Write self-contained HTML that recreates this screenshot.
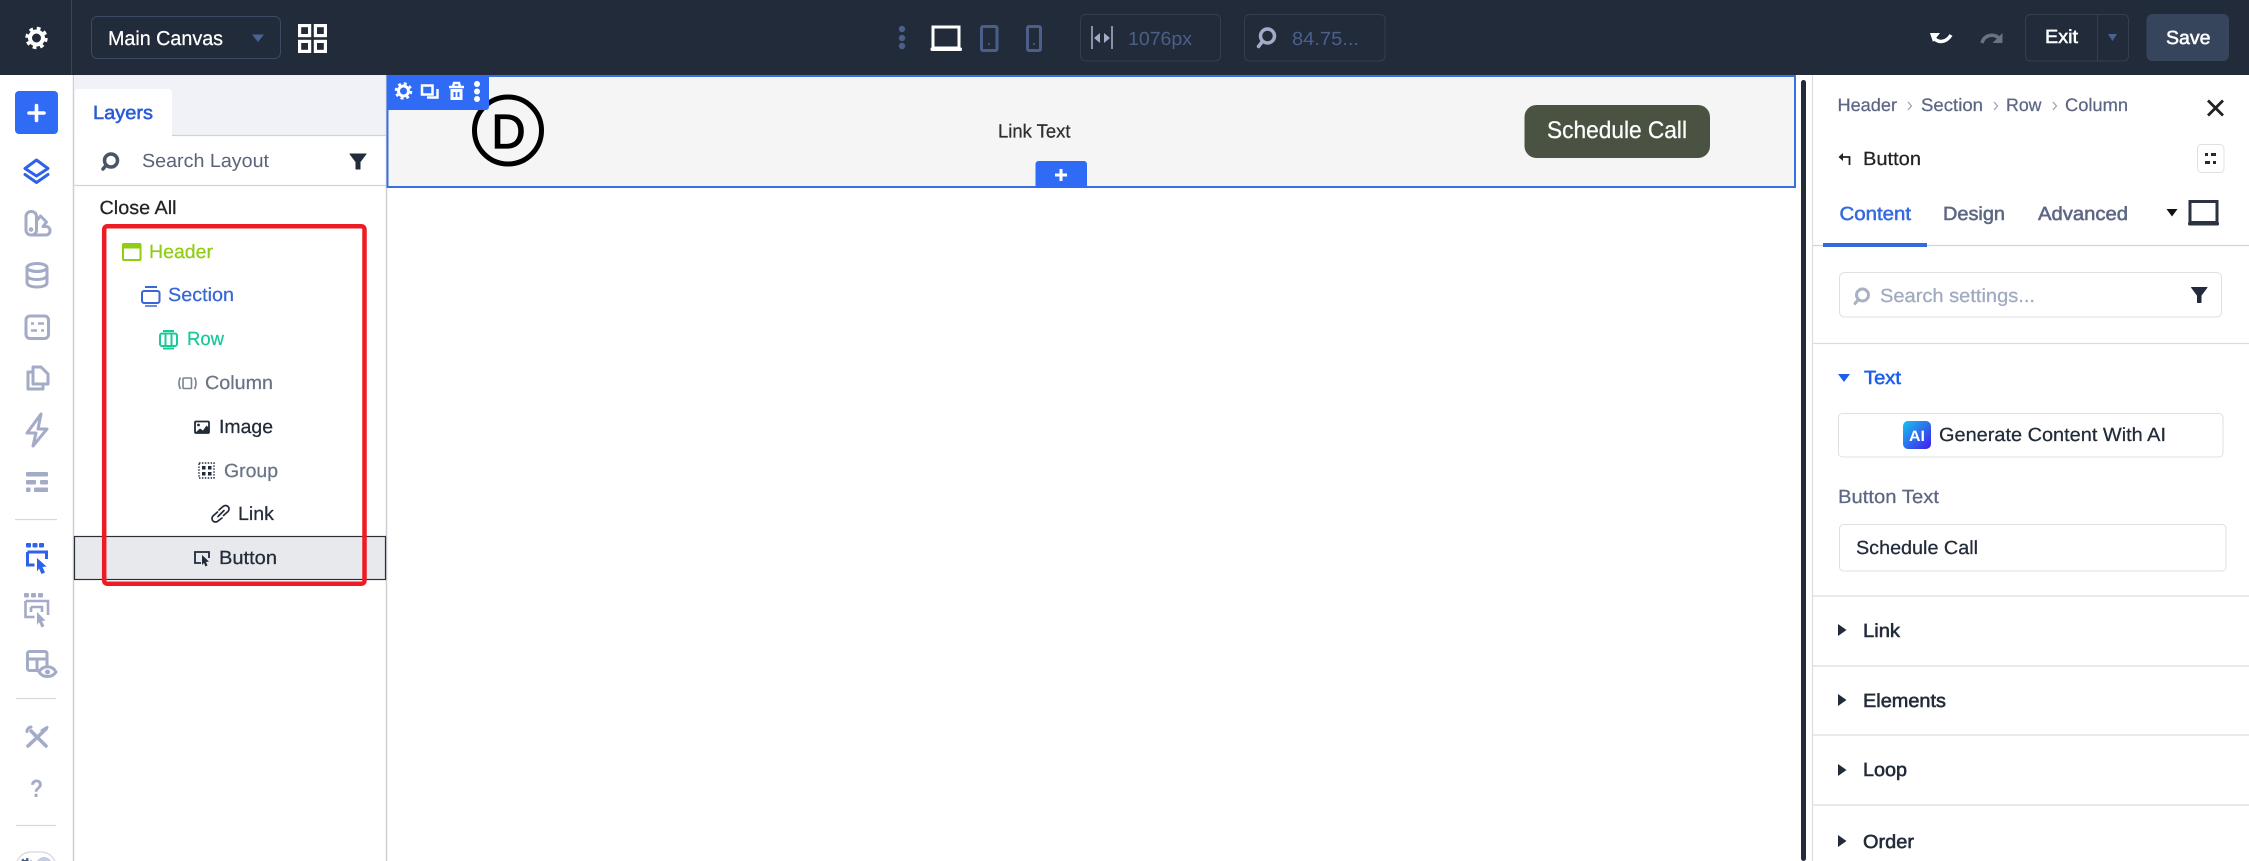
<!DOCTYPE html>
<html lang="en">
<head>
<meta charset="utf-8">
<title>Layers - Visual Builder</title>
<style>
html,body{margin:0;padding:0;width:2249px;height:861px;overflow:hidden;background:#fff}
svg{display:block}
text{font-family:"Liberation Sans",sans-serif;font-size:19px;text-rendering:geometricPrecision}
.m{fill:currentColor;stroke:currentColor;stroke-width:.25px}
.s{fill:currentColor;stroke:currentColor;stroke-width:.55px}
.b{font-weight:700}
.ico{fill:none;stroke:#a3abc7;stroke-width:3;stroke-linejoin:round;stroke-linecap:round}
.blu{stroke:#2f62ea}
</style>
</head>
<body>
<svg width="2249" height="861" viewBox="0 0 2249 861" xmlns="http://www.w3.org/2000/svg">
<rect width="2249" height="861" fill="#fff"/>

<!-- Top bar -->
<rect width="2249" height="75" fill="#222b3a"/>
<line x1="71.5" y1="0" x2="71.5" y2="75" stroke="#3a4456"/>
<g fill="none" stroke="#fff">
  <circle cx="36.5" cy="38" r="6.5" stroke-width="4"/>
  <circle cx="36.5" cy="38" r="9.5" stroke-width="3.4" stroke-dasharray="3.7 3.76"/>
</g>
<rect x="91.5" y="16.5" width="189" height="42" rx="6" fill="none" stroke="#3d4a63"/>
<text x="108" y="45" textLength="115" lengthAdjust="spacingAndGlyphs" class="m" color="#fff" style="font-size:20px">Main Canvas</text>
<path d="M252 34.500h12l-6 7.500z" fill="#4a6291"/>
<g fill="none" stroke="#fff" stroke-width="3.200">
  <rect x="299.600" y="25.600" width="10" height="10"/>
  <rect x="315.400" y="25.600" width="10" height="10"/>
  <rect x="299.600" y="41.400" width="10" height="10"/>
  <rect x="315.400" y="41.400" width="10" height="10"/>
</g>

<!-- Devices -->
<g fill="#4b5f8a">
  <circle cx="902" cy="29" r="3.200"/><circle cx="902" cy="38" r="3.200"/><circle cx="902" cy="46" r="3.200"/>
</g>
<rect x="933" y="27" width="26" height="21" fill="none" stroke="#fff" stroke-width="3"/>
<rect x="930.500" y="47.500" width="31.500" height="3.500" rx="1.500" fill="#fff"/>
<rect x="981.500" y="26.500" width="15.500" height="24" rx="1.500" fill="none" stroke="#4b5f8a" stroke-width="3"/>
<circle cx="989" cy="44" r="1" fill="#4b5f8a"/>
<rect x="1027.500" y="26.500" width="13" height="24" rx="1.500" fill="none" stroke="#4b5f8a" stroke-width="3"/>
<circle cx="1034" cy="44" r="1" fill="#4b5f8a"/>

<rect x="1080.500" y="14.500" width="140" height="46.500" rx="5" fill="none" stroke="#343e52"/>
<g stroke="#a3abc7" stroke-width="1.600" fill="none">
  <line x1="1092" y1="26" x2="1092" y2="49"/><line x1="1112" y1="26" x2="1112" y2="49"/>
</g>
<path d="M1094 38l6-5v10zM1110 38l-6-5v10z" fill="#a3abc7"/>
<text x="1128" y="45" textLength="64" lengthAdjust="spacingAndGlyphs" fill="#4b5f8a">1076px</text>

<rect x="1244.500" y="14.500" width="140.500" height="46.500" rx="5" fill="none" stroke="#343e52"/>
<circle cx="1267.500" cy="36" r="7" fill="none" stroke="#a3abc7" stroke-width="3.500"/>
<line x1="1262" y1="42" x2="1258.500" y2="46.500" stroke="#a3abc7" stroke-width="3.500" stroke-linecap="round"/>
<text x="1292" y="45" textLength="67" lengthAdjust="spacingAndGlyphs" fill="#4b5f8a">84.75...</text>

<!-- Right of top bar -->
<path d="M1930 33h10l-7 9z" fill="#fff"/>
<path d="M1934 38c4 5 12 5 17-3" fill="none" stroke="#fff" stroke-width="3.500"/>
<path d="M1982 43c2-8 11-10 17-5" fill="none" stroke="#6a7280" stroke-width="3.500"/>
<path d="M2002.500 33v10h-10z" fill="#6a7280"/>
<rect x="2025.500" y="14.500" width="103" height="46.500" rx="5" fill="none" stroke="#343e52"/>
<line x1="2097.500" y1="14.500" x2="2097.500" y2="61" stroke="#343e52"/>
<text x="2045" y="43" textLength="33" lengthAdjust="spacingAndGlyphs" class="s" color="#fff">Exit</text>
<path d="M2108 34h9l-4.500 7z" fill="#4a6291"/>
<rect x="2146.500" y="14" width="82.500" height="47" rx="6" fill="#36455c"/>
<text x="2166" y="44" textLength="44.500" lengthAdjust="spacingAndGlyphs" class="s" color="#fff">Save</text>

<!-- Left icon rail -->
<line x1="73.500" y1="75" x2="73.500" y2="861" stroke="#cfcfd4" stroke-width="1.500"/>
<rect x="15" y="91" width="43" height="43" rx="4" fill="#2f6bf5"/>
<path d="M29 113h15M36.500 105.500v15" stroke="#fff" stroke-width="3.600" stroke-linecap="round"/>

<path class="ico blu" d="M36.500 160l11.500 8.500-11.500 7.500-11.500-7.500zM25 174.500l11.500 8 11.500-8"/>

<g class="ico">
  <rect x="26" y="211.500" width="10.500" height="23.500" rx="5"/>
  <path d="M36.500 221l4-5 6 6-3.500 4.500h3a4 4 0 0 1 4 4v.5a4 4 0 0 1-4 4H31"/>
  <circle cx="31" cy="229.500" r="0.800" fill="#a3abc7"/>
</g>

<g class="ico">
  <ellipse cx="37" cy="267.500" rx="10" ry="4"/>
  <path d="M27 267.500v15c0 3 4.500 4.500 10 4.500s10-1.500 10-4.500v-15M27 275c0 3 4.500 4.500 10 4.500s10-1.500 10-4.500"/>
</g>

<rect class="ico" x="26" y="316" width="22.500" height="22.500" rx="4"/>
<path d="M31 323.500h3M38 323.500h6M31 330.500h6M41 330.500h3" stroke="#a3abc7" stroke-width="2.400" fill="none"/>

<g class="ico">
  <path d="M33 367h8l7 7v10H33z"/>
  <path d="M33 372h-5v17h15v-5"/>
</g>

<path class="ico" d="M41 414L27 433h9l-3 13 14-17h-9z"/>

<g fill="#a3abc7">
  <rect x="26" y="472" width="22" height="4.500" rx="1"/>
  <rect x="26" y="480" width="10" height="4.500" rx="1"/><rect x="40" y="480" width="8" height="4.500" rx="1"/>
  <rect x="26" y="487.500" width="4.500" height="4.500" rx="1"/><rect x="34" y="487.500" width="14" height="4.500" rx="1"/>
</g>
<line x1="15" y1="519.500" x2="57" y2="519.500" stroke="#d7d7dc" stroke-width="1.200"/>

<g fill="#2f62ea">
  <rect x="26" y="543" width="5" height="4.500" rx="1"/><rect x="32.500" y="543" width="5" height="4.500" rx="1"/><rect x="39" y="543" width="5" height="4.500" rx="1"/>
  <path d="M37 558l9.500 8.500-4 .5 2.500 5.500-3.500 1.500-2.500-5.500-2 3z"/>
</g>
<path d="M27.500 552h19v7M27.500 552v13h7" fill="none" stroke="#2f62ea" stroke-width="3"/>

<g fill="#a3abc7">
  <rect x="24" y="593" width="5" height="4.500" rx="1"/><rect x="31" y="593" width="5" height="4.500" rx="1"/><rect x="38" y="593" width="5" height="4.500" rx="1"/>
  <path d="M37 612l8.500 8.500-3.500.5 2.500 5-3 1.500-2.500-5.500-2 3z"/>
</g>
<path d="M25.500 601h22.500v14M25.500 601v16h9M31 607h11v5M31 607v5" fill="none" stroke="#a3abc7" stroke-width="2.600"/>

<g class="ico">
  <rect x="27.500" y="651.500" width="19.500" height="19" rx="2"/>
  <path d="M27.500 659h19.500M37 659v11"/>
  <path d="M39 672c4-7 13-7 17 0-4 6-13 6-17 0z" fill="#fff"/>
  <circle cx="47.500" cy="672" r="1" fill="#a3abc7"/>
</g>
<line x1="16" y1="698.500" x2="56" y2="698.500" stroke="#d7d7dc" stroke-width="1.200"/>

<g stroke="#a3abc7" fill="none" stroke-linecap="round">
  <path d="M28 746L46 729" stroke-width="3.600"/>
  <path d="M31 731L46 746" stroke-width="3.600"/>
  <path d="M31 727a4.500 4.500 0 0 0-4 4.500M42 730.500l5-3" stroke-width="3"/>
</g>
<text x="30" y="797" textLength="13" lengthAdjust="spacingAndGlyphs" class="b" fill="#a3abc7" style="font-size:25px">?</text>
<line x1="16" y1="825.500" x2="56" y2="825.500" stroke="#d7d7dc" stroke-width="1.200"/>
<rect x="16" y="852" width="40" height="30" rx="15" fill="#fff" stroke="#dcdde3" stroke-width="1.500"/>
<g fill="none" stroke="#4b5f8a">
  <circle cx="26" cy="865" r="4" stroke-width="2.500"/>
  <circle cx="26" cy="865" r="6" stroke-width="2" stroke-dasharray="2.400 2.300"/>
</g>
<circle cx="44" cy="865" r="8" fill="#c5cbe0"/>

<!-- Layers panel -->
<rect x="74" y="75" width="312" height="60" fill="#f0f2f7"/>
<path d="M75 135V92a3 3 0 0 1 3-3h91a3 3 0 0 1 3 3v43z" fill="#fff"/>
<line x1="172" y1="135.500" x2="386" y2="135.500" stroke="#cfd2da" stroke-width="1.200"/>
<line x1="386.500" y1="75" x2="386.500" y2="861" stroke="#cfcfd4" stroke-width="1.500"/>
<text x="93" y="119" textLength="60" lengthAdjust="spacingAndGlyphs" class="s" color="#2a5bd7">Layers</text>
<circle cx="111" cy="160.500" r="6.500" fill="none" stroke="#4a5468" stroke-width="3.500"/>
<line x1="105.500" y1="166" x2="103" y2="169" stroke="#4a5468" stroke-width="3.500" stroke-linecap="round"/>
<text x="142" y="167" textLength="127" lengthAdjust="spacingAndGlyphs" fill="#5a6478">Search Layout</text>
<path d="M350 154h16l-6 8v7h-4v-7z" fill="#222b3a" stroke="#222b3a" stroke-linejoin="round"/>
<line x1="74" y1="185.500" x2="386" y2="185.500" stroke="#d3d4d9" stroke-width="1.200"/>
<text x="99.500" y="214" textLength="77" lengthAdjust="spacingAndGlyphs" class="m" color="#222">Close All</text>

<!-- Button row -->
<rect x="74.500" y="536.500" width="311" height="43" fill="#e8e9ec" stroke="#2a2f3a" stroke-width="1.200"/>

<!-- Tree rows -->
<rect x="123" y="244" width="17.500" height="16" rx="1" fill="none" stroke="#8fcd12" stroke-width="2"/>
<rect x="123" y="243" width="17.500" height="5.500" fill="#8fcd12"/>
<text x="149" y="258" textLength="64" lengthAdjust="spacingAndGlyphs" class="m" color="#8fcd12">Header</text>

<rect x="142" y="291" width="17.500" height="12" rx="2" fill="none" stroke="#3867d6" stroke-width="2"/>
<path d="M145 287h12" stroke="#3867d6" stroke-width="2"/>
<path d="M145 306h12" stroke="#3867d6" stroke-width="1.500"/>
<text x="168" y="301" textLength="66" lengthAdjust="spacingAndGlyphs" class="m" color="#3867d6">Section</text>

<g fill="none" stroke="#18c99a" stroke-width="2">
  <rect x="160" y="333.500" width="17" height="12.500" rx="2"/>
  <path d="M163 331h11M163 348.500h11M165.500 334v12M171.500 334v12"/>
</g>
<text x="187" y="345" textLength="37" lengthAdjust="spacingAndGlyphs" class="m" color="#18c99a">Row</text>

<g fill="none" stroke="#7a8295" stroke-width="1.600">
  <rect x="183" y="378" width="8.500" height="10.500" rx="1"/>
  <path d="M180.500 377.500c-2 3-2 8 0 11.500M194.500 377.500c2 3 2 8 0 11.500"/>
</g>
<text x="205" y="389" textLength="68" lengthAdjust="spacingAndGlyphs" class="m" color="#6b7487">Column</text>

<rect x="195" y="421.500" width="14" height="11.500" rx="1" fill="#fff" stroke="#222b3a" stroke-width="1.800"/>
<circle cx="198.500" cy="425" r="1.400" fill="#222b3a"/>
<path d="M195 433l5-4.500 3 2 3.500-5 2.500 2.500v5z" fill="#222b3a"/>
<text x="219" y="433" textLength="54" lengthAdjust="spacingAndGlyphs" class="m" color="#222b3a">Image</text>

<g fill="#222b3a">
  <rect x="199" y="463" width="15" height="15" fill="none" stroke="#222b3a" stroke-width="1.400" stroke-dasharray="1.500 1.400"/>
  <rect x="202" y="466" width="3.500" height="3.500"/><rect x="208" y="466" width="3.500" height="3.500"/>
  <rect x="202" y="472" width="3.500" height="3.500"/><rect x="208" y="472" width="3.500" height="3.500"/>
</g>
<text x="224" y="477" textLength="54" lengthAdjust="spacingAndGlyphs" class="m" color="#6b7487">Group</text>

<g fill="none" stroke="#222b3a" stroke-width="1.700" stroke-linecap="round">
  <path d="M219 510l4-3.500a3.500 3.500 0 0 1 5 5l-4.500 4"/>
  <path d="M222 518l-4 3a3.500 3.500 0 0 1-5-5l4.500-4"/>
  <path d="M218 516.500l6-6"/>
</g>
<text x="238" y="520" textLength="36" lengthAdjust="spacingAndGlyphs" class="m" color="#222b3a">Link</text>

<path d="M201 563h-6v-11h14v6" fill="none" stroke="#222b3a" stroke-width="1.800"/>
<path d="M202 555l7 6.500-3 .5 1.500 3.500-2 1-1.500-3.500-2 2z" fill="#222b3a"/>
<text x="219" y="564" textLength="58" lengthAdjust="spacingAndGlyphs" class="m" color="#222b3a">Button</text>

<!-- Red box -->
<rect x="104.200" y="226.200" width="260.300" height="357.600" rx="3" fill="none" stroke="#ed1c24" stroke-width="4.500"/>

<!-- Canvas section -->
<rect x="387.500" y="76" width="1407.500" height="111" fill="#f5f5f5" stroke="#3b6fe0" stroke-width="2"/>

<!-- D logo -->
<circle cx="508" cy="130.500" r="33.500" fill="none" stroke="#000" stroke-width="5"/>
<text x="491.500" y="148" textLength="34" lengthAdjust="spacingAndGlyphs" fill="#000" stroke="#000" stroke-width="1.200" style="font-size:48px">D</text>

<text x="998" y="137.500" textLength="72.500" lengthAdjust="spacingAndGlyphs" class="m" color="#2f2f2f">Link Text</text>

<rect x="1524.500" y="105" width="185.500" height="53" rx="12" fill="#4a5342"/>
<text x="1547" y="138" textLength="140" lengthAdjust="spacingAndGlyphs" class="m" color="#fff" style="font-size:24px">Schedule Call</text>

<path d="M1035.500 188v-24a3 3 0 0 1 3-3h45.500a3 3 0 0 1 3 3v24z" fill="#2f6bf5"/>
<path d="M1055 175h12M1061 169v12" stroke="#fff" stroke-width="3"/>

<!-- Section toolbar -->
<path d="M387 75h102v32a3 3 0 0 1-3 3H387z" fill="#2f6bf5"/>
<g fill="none" stroke="#fff">
  <circle cx="403.500" cy="91" r="5" stroke-width="3"/>
  <circle cx="403.500" cy="91" r="7.500" stroke-width="2.500" stroke-dasharray="2.900 3"/>
</g>
<path d="M422 85.500h10.500v9H422zM437.500 89v8.500h-10.500" fill="none" stroke="#fff" stroke-width="2.500"/>
<path d="M449 87h15M453 86.500l1-3.500h5l1 3.500" fill="none" stroke="#fff" stroke-width="2.400"/>
<path d="M450.500 89h12v11h-12z" fill="#fff"/>
<path d="M454.500 92v5M458.500 92v5" stroke="#2f6bf5" stroke-width="2"/>
<circle cx="477" cy="84" r="3" fill="#fff"/><circle cx="477" cy="91.500" r="3" fill="#fff"/><circle cx="477" cy="99" r="3" fill="#fff"/>

<!-- Resizer -->
<rect x="1801" y="80" width="5" height="781" rx="2.500" fill="#232b3a"/>
<line x1="1812.500" y1="75" x2="1812.500" y2="861" stroke="#dcdde0" stroke-width="1.200"/>

<!-- Settings panel -->
<text x="1837.500" y="111" textLength="59.500" lengthAdjust="spacingAndGlyphs" class="m" color="#5d6784" style="font-size:18px">Header</text>
<text x="1921" y="111" textLength="62" lengthAdjust="spacingAndGlyphs" class="m" color="#5d6784" style="font-size:18px">Section</text>
<text x="2006" y="111" textLength="35.500" lengthAdjust="spacingAndGlyphs" class="m" color="#5d6784" style="font-size:18px">Row</text>
<text x="2065" y="111" textLength="63" lengthAdjust="spacingAndGlyphs" class="m" color="#5d6784" style="font-size:18px">Column</text>
<g fill="none" stroke="#9aa1b4" stroke-width="1.200">
  <path d="M1908 102l3.500 4-3.500 4M1994 102l3.500 4-3.500 4M2053 102l3.500 4-3.500 4"/>
</g>
<path d="M2208 100.500l15 15M2223 100.500l-15 15" stroke="#222" stroke-width="2.800"/>

<path d="M1849.500 165v-8h-9" fill="none" stroke="#222" stroke-width="1.800"/>
<path d="M1843 153l-4.500 4 4.500 4z" fill="#222"/>
<text x="1863" y="165" textLength="58" lengthAdjust="spacingAndGlyphs" class="m" color="#222">Button</text>
<rect x="2197.500" y="144.500" width="26.500" height="28" rx="4" fill="#fff" stroke="#e0e0e4"/>
<path d="M2205 154.500h3M2211 154.500h5M2205 162.500h5M2213 162.500h3" stroke="#222b3a" stroke-width="3"/>

<text x="1839.500" y="220" textLength="71.500" lengthAdjust="spacingAndGlyphs" class="s" color="#3669e0">Content</text>
<text x="1943" y="220" textLength="62" lengthAdjust="spacingAndGlyphs" class="s" color="#5d6784">Design</text>
<text x="2038" y="220" textLength="90" lengthAdjust="spacingAndGlyphs" class="s" color="#5d6784">Advanced</text>
<path d="M2166.500 209h11l-5.500 7.500z" fill="#111"/>
<rect x="2190" y="201.500" width="27" height="21" fill="none" stroke="#2b3342" stroke-width="3"/>
<rect x="2188" y="222" width="31" height="3.500" rx="1.500" fill="#2b3342"/>
<line x1="1813" y1="245.500" x2="2249" y2="245.500" stroke="#d3d4d9" stroke-width="1.200"/>
<rect x="1823" y="243" width="104" height="4" fill="#3669e0"/>

<rect x="1839.500" y="272.500" width="382" height="44.500" rx="5" fill="#fff" stroke="#dfe0e4"/>
<circle cx="1862.500" cy="295" r="6" fill="none" stroke="#a9b1c4" stroke-width="3"/>
<line x1="1858" y1="300" x2="1855" y2="303.500" stroke="#a9b1c4" stroke-width="3" stroke-linecap="round"/>
<text x="1880" y="302" textLength="155" lengthAdjust="spacingAndGlyphs" class="m" color="#9eaabf">Search settings...</text>
<path d="M2191.500 287.500h15.500l-6 8v7h-3.500v-7z" fill="#222b3a" stroke="#222b3a" stroke-linejoin="round"/>
<line x1="1813" y1="343.500" x2="2249" y2="343.500" stroke="#dcdde0" stroke-width="1.200"/>

<path d="M1838 374h12l-6 8z" fill="#1f5fe8"/>
<text x="1864" y="384" textLength="37" lengthAdjust="spacingAndGlyphs" class="s" color="#1f5fe8">Text</text>

<rect x="1838.500" y="413.500" width="384.500" height="43.500" rx="4" fill="#fff" stroke="#dfe0e4"/>
<defs>
  <linearGradient id="ai" x1="0" y1="0" x2="1" y2="1">
    <stop offset="0" stop-color="#16c4ee"/><stop offset="1" stop-color="#4319ee"/>
  </linearGradient>
</defs>
<rect x="1903" y="421" width="28" height="28" rx="5" fill="url(#ai)"/>
<text x="1909" y="441" textLength="16" lengthAdjust="spacingAndGlyphs" class="b" fill="#fff" style="font-size:15px">AI</text>
<text x="1939" y="441" textLength="227" lengthAdjust="spacingAndGlyphs" class="m" color="#222b3a">Generate Content With AI</text>

<text x="1838" y="503" textLength="101" lengthAdjust="spacingAndGlyphs" class="m" color="#5d6784">Button Text</text>
<rect x="1839.500" y="524.500" width="386.500" height="46.500" rx="4" fill="#fff" stroke="#dfe0e4"/>
<text x="1856" y="554" textLength="122" lengthAdjust="spacingAndGlyphs" class="m" color="#222b3a">Schedule Call</text>

<g stroke="#dcdde0" stroke-width="1.200">
  <line x1="1813" y1="596" x2="2249" y2="596"/>
  <line x1="1813" y1="666" x2="2249" y2="666"/>
  <line x1="1813" y1="735" x2="2249" y2="735"/>
  <line x1="1813" y1="805" x2="2249" y2="805"/>
</g>
<g fill="#222b3a">
  <path d="M1838 624l8.500 6-8.500 6z"/>
  <path d="M1838 694l8.500 6-8.500 6z"/>
  <path d="M1838 764l8.500 6-8.500 6z"/>
  <path d="M1838 835l8.500 6-8.500 6z"/>
</g>
<text x="1863" y="637" textLength="37" lengthAdjust="spacingAndGlyphs" class="s" color="#222b3a">Link</text>
<text x="1863" y="707" textLength="83" lengthAdjust="spacingAndGlyphs" class="s" color="#222b3a">Elements</text>
<text x="1863" y="776" textLength="44" lengthAdjust="spacingAndGlyphs" class="s" color="#222b3a">Loop</text>
<text x="1863" y="848" textLength="51" lengthAdjust="spacingAndGlyphs" class="s" color="#222b3a">Order</text>
</svg>
</body>
</html>
